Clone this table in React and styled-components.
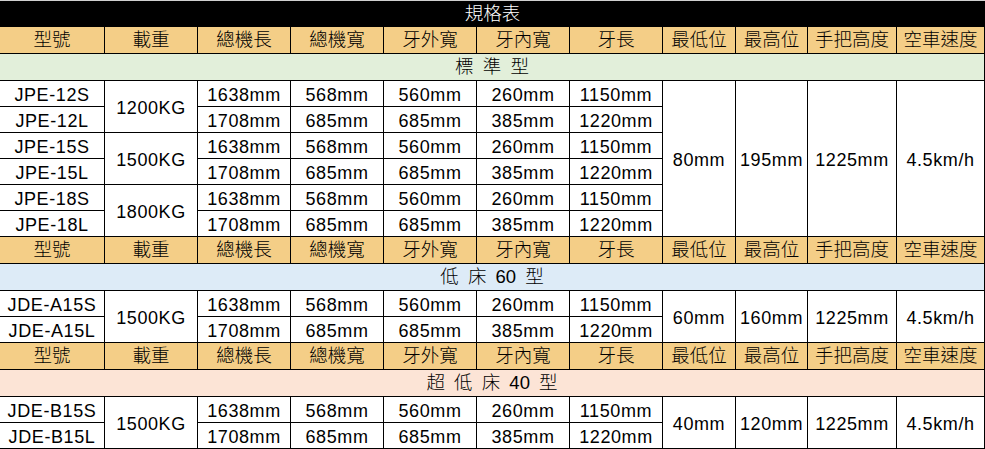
import styled, { createGlobalStyle } from "styled-components";

const GlobalStyle = createGlobalStyle`
  * {
    box-sizing: border-box;
  }

  body {
    margin: 0;
    background: #fff;
    font-family: "Liberation Sans", "Noto Sans CJK TC", sans-serif;
    color: #000;
  }
`;

const Page = styled.div`
  width: 985px;
  border-top: 1px solid #d0d0d0;
`;

const Sheet = styled.table`
  width: 985px;
  table-layout: fixed;
  border-collapse: separate;
  border-spacing: 0;
`;

const Row = styled.tr`
  height: ${(p) => p.$h}px;
`;

const TitleCell = styled.th`
  height: 26px;
  padding: 0;
  background: #000;
  color: #fff;
  font-size: 18.5px;
  font-weight: 300;
  line-height: 1;
  text-align: center;
`;

const HeadCell = styled.th`
  padding: 0;
  background: #f4ce87;
  border-right: 1px solid #000;
  border-bottom: 1px solid #000;
  font-size: 18.5px;
  font-weight: 300;
  line-height: 1;
  text-align: center;
  white-space: nowrap;
`;

const SectionCell = styled.td`
  padding: 0;
  background: ${(p) => p.$bg};
  border-right: 1px solid #000;
  border-bottom: 1px solid #000;
  font-size: 18.5px;
  font-weight: 300;
  line-height: 1;
  word-spacing: 4px;
  text-align: center;
  white-space: pre;
`;

const Cell = styled.td`
  padding: 2px 0 0;
  background: #fff;
  border-right: 1px solid #000;
  border-bottom: 1px solid #000;
  font-size: 18px;
  line-height: 1;
  letter-spacing: 0.6px;
  text-align: center;
  white-space: nowrap;
`;

const widths = [105, 93, 93, 93, 93, 93, 93, 73, 72, 89, 88];
const heads = ["型號", "載重", "總機長", "總機寬", "牙外寬", "牙內寬", "牙長", "最低位", "最高位", "手把高度", "空車速度"];

const shortRow = ["1638mm", "568mm", "560mm", "260mm", "1150mm"];
const longRow = ["1708mm", "685mm", "685mm", "385mm", "1220mm"];

const blocks = [
  {
    name: "標 準 型",
    bg: "#e2efda",
    groups: [
      { load: "1200KG", models: ["JPE-12S", "JPE-12L"] },
      { load: "1500KG", models: ["JPE-15S", "JPE-15L"] },
      { load: "1800KG", models: ["JPE-18S", "JPE-18L"] },
    ],
    tail: ["80mm", "195mm", "1225mm", "4.5km/h"],
  },
  {
    name: "低 床 60 型",
    bg: "#ddebf7",
    groups: [{ load: "1500KG", models: ["JDE-A15S", "JDE-A15L"] }],
    tail: ["60mm", "160mm", "1225mm", "4.5km/h"],
  },
  {
    name: "超 低 床 40 型",
    bg: "#fce4d6",
    groups: [{ load: "1500KG", models: ["JDE-B15S", "JDE-B15L"] }],
    tail: ["40mm", "120mm", "1225mm", "4.5km/h"],
  },
];

function Block({ block }) {
  const span = block.groups.length * 2;

  return (
    <>
      <Row $h={27}>
        {heads.map((h) => (
          <HeadCell key={h}>{h}</HeadCell>
        ))}
      </Row>
      <Row $h={27}>
        <SectionCell colSpan={11} $bg={block.bg}>
          {block.name}
        </SectionCell>
      </Row>
      {block.groups.map((g, gi) =>
        g.models.map((model, mi) => (
          <Row $h={26} key={model}>
            <Cell>{model}</Cell>
            {mi === 0 && <Cell rowSpan={2}>{g.load}</Cell>}
            {(mi === 0 ? shortRow : longRow).map((v, i) => (
              <Cell key={i}>{v}</Cell>
            ))}
            {gi === 0 &&
              mi === 0 &&
              block.tail.map((v) => (
                <Cell key={v} rowSpan={span}>
                  {v}
                </Cell>
              ))}
          </Row>
        ))
      )}
    </>
  );
}

export default function App() {
  return (
    <>
      <GlobalStyle />
      <Page>
        <Sheet>
          <colgroup>
            {widths.map((w, i) => (
              <col key={i} style={{ width: w }} />
            ))}
          </colgroup>
          <tbody>
            <Row $h={26}>
              <TitleCell colSpan={11}>規格表</TitleCell>
            </Row>
            {blocks.map((b) => (
              <Block key={b.name} block={b} />
            ))}
          </tbody>
        </Sheet>
      </Page>
    </>
  );
}
